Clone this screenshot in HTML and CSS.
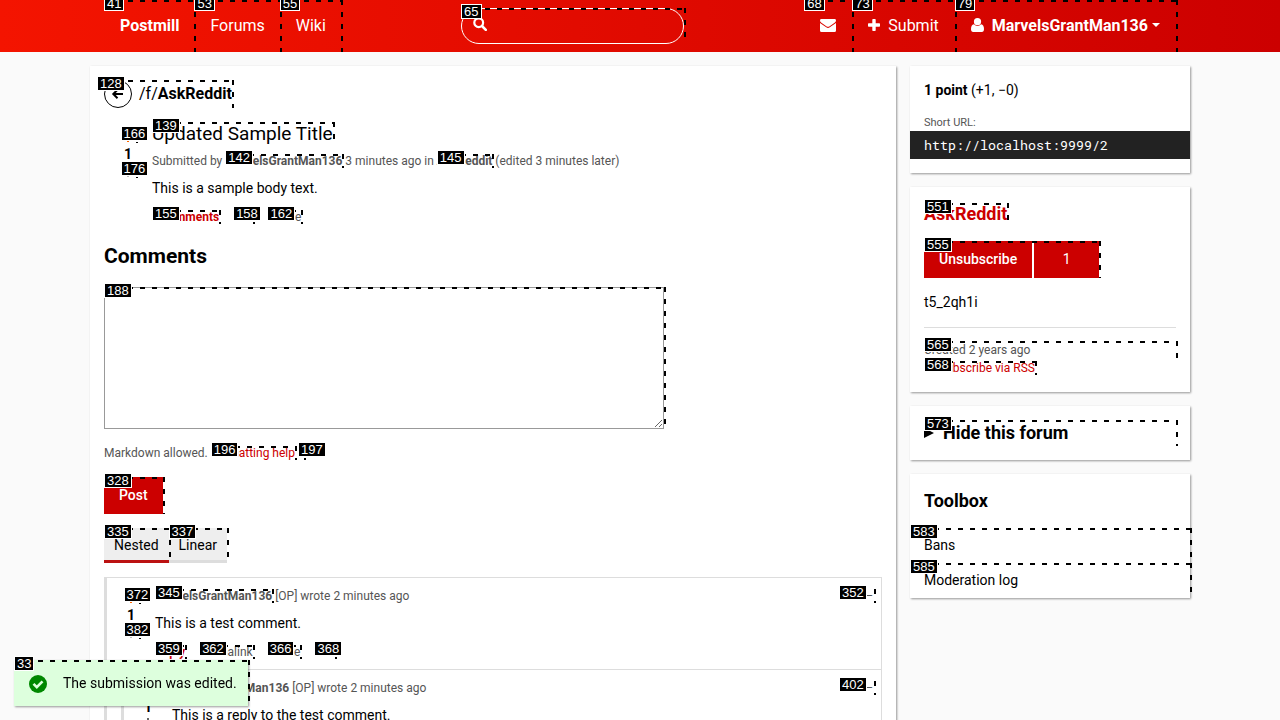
FILE: index.html
```html
<!DOCTYPE html>
<html lang="en">
<head>
<meta charset="utf-8">
<title>Updated Sample Title</title>
<link rel="stylesheet" href="styles.css">
</head>
<body>
<header class="site-header">
  <div class="site-header__inner">
    <nav class="site-nav">
      <a class="site-nav__link site-nav__link--brand mark" href="#"><span class="tag">41</span>Postmill</a>
      <a class="site-nav__link mark" href="#"><span class="tag">53</span>Forums</a>
      <a class="site-nav__link mark" href="#"><span class="tag">55</span>Wiki</a>
    </nav>
    <form class="search mark">
      <span class="tag">65</span>
      <svg class="search__icon" width="14" height="14" viewBox="0 0 14 14"><circle cx="5.7" cy="5.7" r="4.4" fill="none" stroke="currentColor" stroke-width="2.2"/><path d="M9 9l3.8 3.8" stroke="currentColor" stroke-width="2.6" stroke-linecap="round"/></svg>
      <input class="search__input" type="search" aria-label="Search">
    </form>
    <nav class="site-nav site-nav--user">
      <a class="site-nav__link mark" href="#" aria-label="Messages"><span class="tag">68</span><svg width="16" height="13" viewBox="0 0 16 13"><path fill="currentColor" d="M1.4 0h13.2Q16 0 16 1.4 16 2.7 14.600 3.700L9.300 7.400Q8 8.300 6.700 7.400L1.400 3.700Q0 2.700 0 1.400 0 0 1.400 0ZM0 4l6.200 4.300Q8 9.500 9.800 8.300L16 4v7.500Q16 13 14.500 13h-13Q0 13 0 11.500Z"/></svg></a>
      <a class="site-nav__link mark" href="#"><span class="tag">73</span><svg width="12" height="12" viewBox="0 0 12 12"><path fill="currentColor" d="M5 0h2q.7 0 .7.700V4.300h3.600q.7 0 .7.700v2q0 .7-.7.700H7.700v3.600q0 .7-.7.700H5q-.7 0-.7-.7V7.700H.7Q0 7.700 0 7V5q0-.7.7-.7h3.600V.7Q4.300 0 5 0Z"/></svg>Submit</a>
      <a class="site-nav__link site-nav__link--account mark" href="#"><span class="tag">79</span><svg width="13" height="14" viewBox="0 0 13 14"><circle cx="6.500" cy="3.700" r="3.600" fill="currentColor"/><path fill="currentColor" d="M2.900 6.200Q4.500 8 6.500 8t3.600-1.800Q13 6.800 13 11q0 3-2.200 3H2.200Q0 14 0 11 0 6.800 2.900 6.200Z"/></svg>MarvelsGrantMan136<span class="caret"></span></a>
    </nav>
  </div>
</header>

<div class="page">
  <main class="content">
    <h1 class="forum-head"><a class="forum-head__link mark" href="#"><span class="tag tag--outdent">128</span><svg width="28" height="28" viewBox="0 0 28 28" fill="none" stroke="currentColor"><circle cx="14" cy="14" r="13.500"/><path stroke-width="2" d="M19 14H9.500M13.500 9.800L9.300 14l4.200 4.200"/></svg><span class="forum-head__name">/f/<b>AskReddit</b></span></a></h1>

    <article class="submission">
      <div class="vote">
        <button class="vote__button vote__button--on mark" aria-label="Upvote"><span class="tag">166</span><svg width="12" height="12" viewBox="0 0 12 12"><path fill="currentColor" d="M6 0l6 6.500-1.500 1.500L7 4.600V12H5V4.600L1.500 8 0 6.500Z"/></svg></button>
        <span class="vote__score">1</span>
        <button class="vote__button mark" aria-label="Downvote"><span class="tag">176</span><svg width="12" height="12" viewBox="0 0 12 12"><path fill="currentColor" d="M6 12l6-6.500L10.500 4 7 7.400V0H5v7.400L1.500 4 0 5.500Z"/></svg></button>
      </div>
      <div class="submission__body">
        <h2 class="submission__title"><a class="mark" href="#"><span class="tag">139</span>Updated Sample Title</a></h2>
        <p class="meta">Submitted by <a class="meta__link mark" href="#"><span class="tag">142</span>MarvelsGrantMan136</a> 3 minutes ago in <a class="meta__link mark" href="#"><span class="tag">145</span>AskReddit</a> (edited 3 minutes later)</p>
        <p class="text">This is a sample body text.</p>
        <ul class="actions">
          <li><a class="actions__main mark" href="#"><span class="tag">155</span>2 comments</a></li>
          <li><a class="mark" href="#"><span class="tag">158</span>Edit</a></li>
          <li><a class="mark" href="#"><span class="tag">162</span>Delete</a></li>
        </ul>
      </div>
    </article>

    <h2 class="section-title">Comments</h2>
    <form class="comment-form">
      <div class="comment-form__field mark"><span class="tag">188</span><textarea class="comment-form__text" aria-label="Comment"></textarea></div>
      <p class="comment-form__help">Markdown allowed. <a class="mark" href="#"><span class="tag">196</span>Formatting help</a> <a class="mark" href="#"><span class="tag">197</span>?</a></p>
      <button class="button mark" type="button"><span class="tag">328</span>Post</button>
    </form>

    <nav class="tabs">
      <a class="tabs__tab tabs__tab--active mark" href="#"><span class="tag">335</span>Nested</a>
      <a class="tabs__tab mark" href="#"><span class="tag">337</span>Linear</a>
    </nav>

    <section class="thread">
      <article class="comment">
        <div class="vote vote--comment">
          <button class="vote__button vote__button--on mark" aria-label="Upvote"><span class="tag">372</span><svg width="12" height="12" viewBox="0 0 12 12"><path fill="currentColor" d="M6 0l6 6.500-1.500 1.500L7 4.600V12H5V4.600L1.500 8 0 6.500Z"/></svg></button>
          <span class="vote__score">1</span>
          <button class="vote__button mark" aria-label="Downvote"><span class="tag">382</span><svg width="12" height="12" viewBox="0 0 12 12"><path fill="currentColor" d="M6 12l6-6.500L10.500 4 7 7.400V0H5v7.400L1.500 4 0 5.500Z"/></svg></button>
        </div>
        <div class="comment__body">
          <div class="comment__head">
            <p class="meta"><a class="meta__link mark" href="#"><span class="tag">345</span>MarvelsGrantMan136</a> [OP] wrote 2 minutes ago</p>
            <a class="comment__fold mark" href="#" aria-label="Collapse"><span class="tag tag--before">352</span>–</a>
          </div>
          <p class="text">This is a test comment.</p>
          <ul class="actions">
            <li><a class="actions__main mark" href="#"><span class="tag">359</span>Reply</a></li>
            <li><a class="mark" href="#"><span class="tag">362</span>Permalink</a></li>
            <li><a class="mark" href="#"><span class="tag">366</span>Delete</a></li>
            <li><a class="mark" href="#"><span class="tag">368</span>Edit</a></li>
          </ul>
        </div>
      </article>
      <div class="thread__replies">
        <article class="comment">
          <div class="vote vote--comment">
            <button class="vote__button vote__button--on" aria-label="Upvote"><svg width="12" height="12" viewBox="0 0 12 12"><path fill="currentColor" d="M6 0l6 6.500-1.500 1.500L7 4.600V12H5V4.600L1.500 8 0 6.500Z"/></svg></button>
            <span class="vote__score">1</span>
            <button class="vote__button" aria-label="Downvote"><svg width="12" height="12" viewBox="0 0 12 12"><path fill="currentColor" d="M6 12l6-6.500L10.500 4 7 7.400V0H5v7.400L1.500 4 0 5.500Z"/></svg></button>
          </div>
          <div class="comment__body">
            <div class="comment__head">
              <p class="meta"><a class="meta__link" href="#">MarvelsGrantMan136</a> [OP] wrote 2 minutes ago</p>
              <a class="comment__fold mark" href="#" aria-label="Collapse"><span class="tag tag--before">402</span>–</a>
            </div>
            <p class="text">This is a reply to the test comment.</p>
          </div>
        </article>
      </div>
    </section>
  </main>

  <aside class="sidebar">
    <section class="card card--score">
      <p class="text"><b>1 point</b> (+1, −0)</p>
      <label class="card__label" for="short-url">Short URL:</label>
      <input class="card__url" id="short-url" type="text" readonly value="http://localhost:9999/2">
    </section>
    <section class="card card--forum">
      <h2 class="card__title card__title--link"><a class="mark" href="#"><span class="tag">551</span>AskReddit</a></h2>
      <button class="button button--split mark" type="button"><span class="tag">555</span><span class="button__label">Unsubscribe</span><span class="button__count">1</span></button>
      <p class="text card__about">t5_2qh1i</p>
      <div class="card__info">
        <p class="mark"><span class="tag">565</span>Created 2 years ago</p>
        <p><a class="card__rss mark" href="#"><span class="tag">568</span><svg class="card__rss-icon" width="10" height="9" viewBox="0 0 10 9" fill="none" stroke="currentColor" stroke-width="1.500"><path d="M1 1q7 0 7 7M1 4q4 0 4 4M1 7h1v1"/></svg>Subscribe via RSS</a></p>
      </div>
    </section>
    <section class="card card--hide">
      <details>
        <summary class="card__title card__summary mark"><span class="tag">573</span><svg width="10" height="10" viewBox="0 0 10 10"><path fill="currentColor" d="M0 0l10 5-10 5Z"/></svg>Hide this forum</summary>
      </details>
    </section>
    <section class="card card--tools">
      <h2 class="card__title">Toolbox</h2>
      <ul class="tools">
        <li><a class="tools__link mark" href="#"><span class="tag">583</span>Bans</a></li>
        <li><a class="tools__link mark" href="#"><span class="tag">585</span>Moderation log</a></li>
      </ul>
    </section>
  </aside>
</div>

<div class="toast mark" role="status"><span class="tag">33</span><svg width="18" height="18" viewBox="0 0 18 18"><circle cx="9" cy="9" r="9" fill="#080"/><path d="M4.500 8.800l3.300 3.400 5.700-5.900" fill="none" stroke="#dfd" stroke-width="2.600"/></svg>The submission was edited.</div>
</body>
</html>
```

FILE: styles.css
```css
* { box-sizing: border-box; }

body {
  margin: 0;
  background: #fafafa;
  color: #000;
  font: 14px/21px Roboto, "Liberation Sans", sans-serif;
}

h1, h2, p, ul { margin: 0; padding: 0; }
ul { list-style: none; }
a { color: inherit; text-decoration: none; }
button { border: 0; font-family: inherit; cursor: pointer; }
svg { display: block; flex: none; }

/* numbered, dashed frames over interactive elements */
.mark { position: relative; }

.mark::after {
  content: "";
  position: absolute;
  inset: 0 -2px 0 0;
  z-index: 2;
  pointer-events: none;
  background:
    repeating-linear-gradient(to right, #000 0 5px, transparent 5px 12px) top / 100% 2px no-repeat,
    repeating-linear-gradient(to bottom, #000 0 5px, transparent 5px 12px) right / 2px 100% no-repeat;
}

.tag {
  position: absolute;
  top: -4px;
  left: 0;
  z-index: 3;
  padding: 0 2px;
  border: 1px solid #fff;
  background: #000;
  color: #fff;
  font: 13px/13px "Liberation Sans", Arial, sans-serif;
  text-align: center;
}

.tag--outdent { left: -7px; }
.tag--before { left: -11px; }

.site-header {
  background: linear-gradient(to right, #f41400, #c00);
  color: #fff;
}

.site-header__inner {
  display: flex;
  max-width: 1100px;
  margin: 0 auto;
  padding: 0 14px;
  align-items: center;
}

.site-nav { display: flex; }

.site-nav__link {
  display: flex;
  align-items: center;
  height: 52px;
  padding: 0 15px 2px 16px;
  font-size: 16px;
}

.site-nav--user .site-nav__link {
  gap: 8px;
  padding-right: 16px;
}

.site-nav__link--brand,
.site-nav__link--account { font-weight: 700; }

.caret {
  margin-left: -4px;
  border: 4px solid transparent;
  border-top-color: currentColor;
  border-bottom: 0;
}

.search {
  width: 223px;
  margin: 0 auto;
}

.search__icon {
  position: absolute;
  top: 9px;
  left: 12px;
}

.search__input {
  display: block;
  width: 100%;
  height: 36px;
  padding: 0 16px 0 36px;
  border: 1px solid #fff;
  border-radius: 18px;
  outline: 0;
  background: transparent;
  color: #fff;
  font: inherit;
}

.page {
  display: flex;
  align-items: flex-start;
  gap: 14px;
  max-width: 1100px;
  margin: 14px auto;
}

.content,
.card {
  background: #fff;
  box-shadow: 1px 1px 2px rgba(0, 0, 0, .4);
}

.content {
  flex: 1;
  min-width: 0;
  padding: 14px;
}

.forum-head {
  display: flex;
  font-size: 16px;
  font-weight: 400;
}

.forum-head__link {
  display: flex;
  align-items: center;
  gap: 7px;
}

.forum-head__name { padding-bottom: 2px; }

.submission {
  display: flex;
  margin-top: 12px;
}

.vote {
  display: flex;
  flex: none;
  flex-direction: column;
  align-items: center;
  width: 48px;
  padding-top: 10px;
}

.vote--comment { padding-top: 3px; }

.vote__button {
  display: flex;
  justify-content: center;
  width: 15px;
  height: 13px;
  padding: 0;
  background: none;
  color: #666;
}

.vote__button--on { color: #f60; }

.vote__score {
  line-height: 22px;
  font-weight: 700;
}

.submission__title {
  font-size: 19px;
  font-weight: 400;
  line-height: 28px;
}

.meta {
  margin-top: 5px;
  color: #555;
  font-size: 12px;
  line-height: 16px;
}

.meta__link { font-weight: 700; }

.text { font-size: 14px; }

.meta + .text,
.comment__head + .text { margin-top: 9px; }

.actions {
  display: flex;
  gap: 14px;
  margin-top: 9px;
  color: #555;
  font-size: 12px;
  line-height: 18px;
}

.actions__main {
  color: #c00;
  font-weight: 700;
}

.section-title {
  margin: 16px 0 17px;
  font-size: 21px;
  line-height: 28px;
}

.comment-form__field { max-width: 560px; }

.comment-form__text {
  display: block;
  width: 100%;
  height: 142px;
  border: 1px solid #999;
  background: #fff;
  font: inherit;
}

.comment-form__help {
  margin: 15px 0;
  color: #555;
  font-size: 12px;
  line-height: 18px;
}

.comment-form__help a { color: #c00; }

.button {
  padding: 8px 15px;
  background: #c00;
  color: #fff;
  font-size: 14px;
  font-weight: 500;
  line-height: 21px;
}

.tabs {
  display: flex;
  margin: 14px 0;
}

.tabs__tab {
  padding: 7px 10px 4px;
  border-bottom: 3px solid #ddd;
  background: #eee;
}

.tabs__tab--active { border-color: #b11; }

.thread {
  border: 1px solid #ddd;
  border-left-width: 3px;
}

.thread__replies {
  margin-left: 14px;
  border-top: 1px solid #ddd;
  border-left: 3px solid #ddd;
}

.comment {
  display: flex;
  padding: 10px 7px 8px 0;
}

.comment__body {
  flex: 1;
  min-width: 0;
}

.comment__head {
  display: flex;
  justify-content: space-between;
  align-items: center;
}

.comment__head .meta { margin: 0; }

.comment__fold {
  width: 24px;
  padding-right: 1px;
  color: #555;
  font-size: 12px;
  line-height: 14px;
  text-align: right;
}

.sidebar {
  display: grid;
  flex: none;
  gap: 14px;
  width: 280px;
}

.card { padding: 14px; }

.card__label {
  display: block;
  margin-top: 13px;
  color: #555;
  font-size: 11px;
  line-height: 17px;
}

.card__url {
  display: block;
  width: calc(100% + 28px);
  height: 28px;
  margin: 0 -14px;
  padding: 0 14px;
  border: 0;
  background: #222;
  color: #fff;
  font-family: "Roboto Mono", "Liberation Mono", monospace;
}

.card__title {
  font-size: 18px;
  font-weight: 700;
  line-height: 26px;
}

.card__title--link { color: #c00; }

.button--split {
  display: flex;
  margin-top: 14px;
  padding: 0;
}

.button__label,
.button__count { padding: 8px 15px; }

.button__count {
  min-width: 67px;
  border-left: 2px solid #fff;
  font-weight: 400;
}

.card__about { margin-top: 14px; }

.card__info {
  margin-top: 14px;
  padding: 13px 0 0;
  border-top: 1px solid #ddd;
  color: #555;
  font-size: 12px;
  line-height: 18px;
}

.card__rss { color: #c00; }

.card__rss-icon {
  display: inline-block;
  margin-right: 5px;
}

.card--forum { padding-bottom: 15px; }

.card__summary {
  display: flex;
  align-items: center;
  gap: 9px;
}

.card--tools { padding-bottom: 0; }

.tools { margin: 14px -14px 0; }

.tools__link {
  display: block;
  padding: 7px 14px;
}

.toast {
  position: fixed;
  bottom: 14px;
  left: 14px;
  z-index: 5;
  display: flex;
  align-items: center;
  gap: 16px;
  padding: 13px 11px 12px 15px;
  background: #dfd;
  box-shadow: 1px 1px 2px rgba(0, 0, 0, .4);
}
```
